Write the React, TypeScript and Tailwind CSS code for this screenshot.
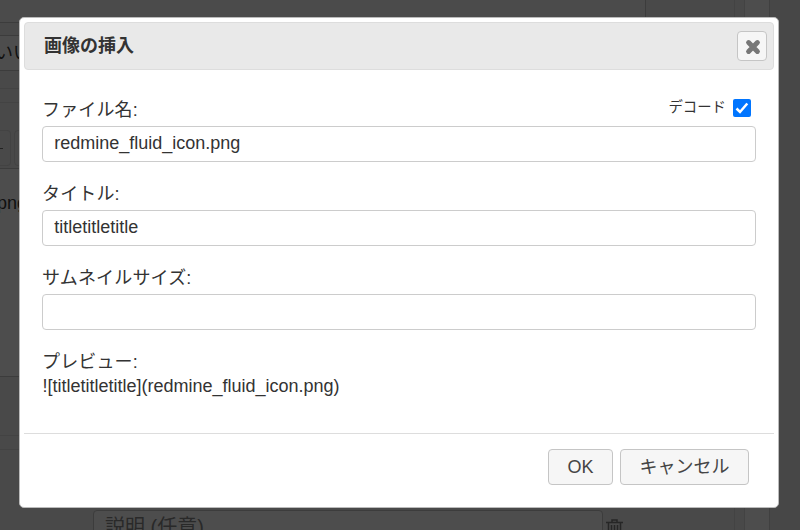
import React from "react";

const font = "font-['Liberation_Sans','Noto_Sans_CJK_JP',sans-serif]";

function Field({ label, value, children }: { label: string; value: string; children?: React.ReactNode }) {
  return (
    <div className="mb-[14px]">
      <div className="flex h-[34px] items-center justify-between">
        <label className="pt-[2px] tracking-[0.15px]">{label}</label>
        {children}
      </div>
      <input
        readOnly
        value={value}
        className="block h-9 w-full rounded border border-[#ccc] bg-white px-[11.2px] pb-[2px] text-[#333] outline-none"
      />
    </div>
  );
}

function Backdrop() {
  return (
    <div className="flex h-full text-[#101010]">
      <div className="flex h-full w-[734px] flex-col">
        <div className="h-[23px] w-[646px] shrink-0 border-r border-b border-[#3c3c3c] bg-[#4b4b4b]" />
        <div className="h-3 shrink-0" />
        <div className="flex h-9 w-10 shrink-0 items-center border-y border-[#3c3c3c] bg-[#4d4d4d] whitespace-nowrap">
          <span className="-ml-[5px]">いい</span>
        </div>
        <div className="h-[18px] w-10 shrink-0 border-b border-[#434343]" />
        <div className="h-[14px] w-10 shrink-0 border-b border-[#434343]" />
        <div className="flex h-[66px] w-10 shrink-0 items-end gap-[3px] border-b border-[#3c3c3c] pb-[2px]">
          <div className="h-[36px] w-[11px] shrink-0 rounded-r border border-l-0 border-[#434343] pt-[17px]">
            <div className="h-px w-[3px] bg-[#222]" />
          </div>
          <div className="h-[36px] w-5 shrink-0 rounded border border-[#434343]" />
        </div>
        <div className="h-[208px] w-10 shrink-0 border-b border-[#3c3c3c] bg-[#4d4d4d] pt-[21px]">
          <span className="-ml-[3px]">png</span>
        </div>
        <div className="h-[59px] w-10 shrink-0 border-b border-[#434343]" />
        <div className="h-[14px] w-10 shrink-0 border-b border-[#434343]" />
        <div className="mt-[60px] flex h-[20px] shrink-0 pl-[93px]">
          <div className="h-9 w-[510px] rounded border border-[#3c3c3c] bg-[#4d4d4d] pl-[11px] pt-[3px] text-[20px] text-[#292929]">説明 (任意)</div>
          <svg className="ml-[3px] mt-[9px]" width="18" height="20" viewBox="0 0 18 20" fill="none" stroke="#262626" strokeWidth="1.5">
            <path d="M0 3.5h17M6 3V1h5v2M2.5 4v15h12V4M5.5 6v10M8.5 6v10M11.5 6v10" />
          </svg>
        </div>
      </div>
      <div className="w-[11px] border-x border-[#434343]" />
      <div className="w-[25px] border-r border-[#404040] bg-[#4d4d4d]" />
      <div className="flex-1 bg-[#474747]" />
    </div>
  );
}

export default function App() {
  return (
    <div className={`relative h-[530px] w-[800px] overflow-hidden bg-[#494949] text-[18px] leading-[27px] ${font}`}>
      <Backdrop />
      <div className="absolute left-[19px] top-[17px] flex h-[491px] w-[760px] flex-col rounded-[5px] border border-[#bbb] bg-white p-1 text-[#333]">
        <div className="flex h-12 shrink-0 items-center justify-between rounded border border-[#ddd] bg-[#e9e9e9] pl-[19px] pr-[6px]">
          <span className="font-bold">画像の挿入</span>
          <button className="flex h-[30px] w-[30px] items-center justify-center rounded border border-[#c5c5c5] bg-[#f6f6f6]">
            <svg width="16" height="16" viewBox="0 0 16 16" className="ml-px mt-px" stroke="#777" strokeWidth="5" strokeLinecap="round">
              <path d="M3.6 3.6 12.4 12.4M12.4 3.6 3.6 12.4" />
            </svg>
          </button>
        </div>
        <div className="flex-1 px-[18px] pt-[22px]">
          <Field label="ファイル名:" value="redmine_fluid_icon.png">
            <label className="mr-[5px] flex items-center gap-[7px] pb-[2px] text-[14.4px]">
              <span className="-mt-[2px]">デコード</span>
              <span className="flex h-[18px] w-[18px] items-center justify-center rounded-[2px] bg-[#0075ff]">
                <svg width="14" height="14" viewBox="0 0 14 14" fill="none" stroke="#fff" strokeWidth="2.5">
                  <path d="M1.5 7.5 5 11 12.3 2.5" />
                </svg>
              </span>
            </label>
          </Field>
          <Field label="タイトル:" value="titletitletitle" />
          <Field label="サムネイルサイズ:" value="" />
          <div className="pt-[6px] leading-6">
            <div className="tracking-[0.15px]">プレビュー:</div>
            <div className="pl-[0.4px]">![titletitletitle](redmine_fluid_icon.png)</div>
          </div>
        </div>
        <div className="flex h-[70px] shrink-0 justify-end gap-[7px] border-t border-[#ddd] pr-[25px] pt-[15px]">
          <button className="h-9 w-[65px] rounded border border-[#c5c5c5] bg-[#f6f6f6] text-[#454545]">OK</button>
          <button className="h-9 w-[129px] rounded border border-[#c5c5c5] bg-[#f6f6f6] text-[#454545]">キャンセル</button>
        </div>
      </div>
    </div>
  );
}
